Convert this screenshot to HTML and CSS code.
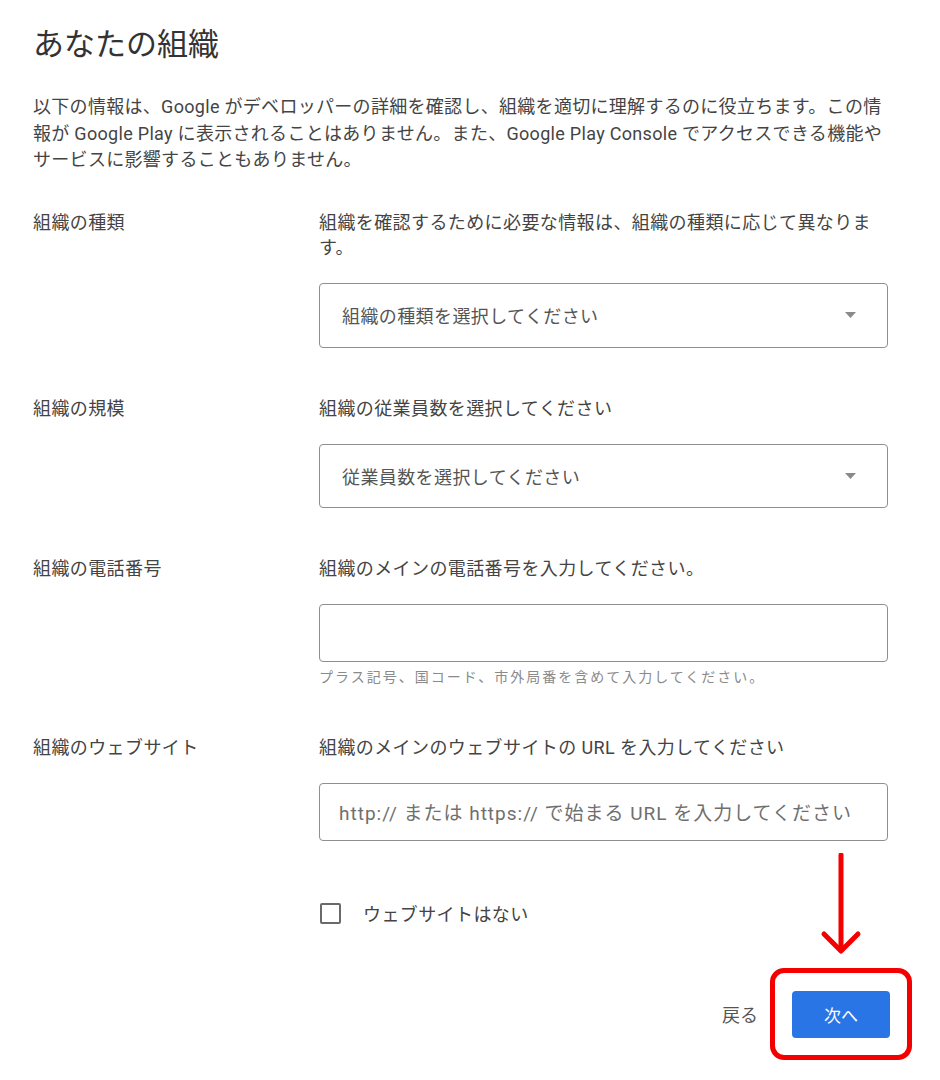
FILE: index.html
```html
<!DOCTYPE html>
<html lang="ja">
<head>
<meta charset="utf-8">
<title>あなたの組織</title>
<link rel="stylesheet" href="styles.css">
</head>
<body>
<main class="page">
  <h1 class="title">あなたの組織</h1>
  <p class="intro">以下の情報は、Google がデベロッパーの詳細を確認し、組織を適切に理解するのに役立ちます。この情報が Google Play に表示されることはありません。また、Google Play Console でアクセスできる機能やサービスに影響することもありません。</p>

  <section class="row row-first">
    <div class="label">組織の種類</div>
    <div class="field">
      <div class="desc">組織を確認するために必要な情報は、組織の種類に応じて異なります。</div>
      <div class="select select-tall">
        <span class="select-text">組織の種類を選択してください</span>
        <svg class="caret" width="11" height="6" viewBox="0 0 11 6"><path d="M0 0 L11 0 L5.5 6 Z" fill="#8a8a8a"/></svg>
      </div>
    </div>
  </section>

  <section class="row">
    <div class="label">組織の規模</div>
    <div class="field">
      <div class="desc">組織の従業員数を選択してください</div>
      <div class="select">
        <span class="select-text">従業員数を選択してください</span>
        <svg class="caret" width="11" height="6" viewBox="0 0 11 6"><path d="M0 0 L11 0 L5.5 6 Z" fill="#8a8a8a"/></svg>
      </div>
    </div>
  </section>

  <section class="row">
    <div class="label">組織の電話番号</div>
    <div class="field">
      <div class="desc">組織のメインの電話番号を入力してください。</div>
      <div class="input"></div>
      <div class="hint">プラス記号、国コード、市外局番を含めて入力してください。</div>
    </div>
  </section>

  <section class="row row-web">
    <div class="label">組織のウェブサイト</div>
    <div class="field">
      <div class="desc">組織のメインのウェブサイトの URL を入力してください</div>
      <div class="input"><span class="placeholder">http:// または https:// で始まる URL を入力してください</span></div>
    </div>
  </section>

  <div class="check-row">
    <span class="checkbox"></span>
    <span class="check-label">ウェブサイトはない</span>
  </div>

  <div class="actions">
    <span class="back">戻る</span>
    <div class="next-wrap">
      <svg class="arrow" width="44" height="104" viewBox="0 0 44 104">
        <path d="M22 2 L22 96" stroke="#f40000" stroke-width="5" stroke-linecap="round" fill="none"/>
        <path d="M5 81 L22 98 L39 81" stroke="#f40000" stroke-width="5" stroke-linecap="round" stroke-linejoin="round" fill="none"/>
      </svg>
      <span class="highlight"></span>
      <span class="next">次へ</span>
    </div>
  </div>
</main>
</body>
</html>
```

FILE: styles.css
```css
* { box-sizing: border-box; }

html, body {
  margin: 0;
  padding: 0;
  background: #ffffff;
}

body {
  font-family: Roboto, "Noto Sans CJK JP", sans-serif;
  color: #3c3c3c;
}

.page {
  width: 890px;
  padding: 25px 0 40px 33px;
}

.title {
  margin: 0;
  font-size: 31px;
  line-height: 40px;
  font-weight: 400;
  color: #333333;
}

.intro {
  margin: 29px 0 0 0;
  width: 857px;
  font-size: 18px;
  line-height: 26.5px;
  letter-spacing: 0.3px;
  color: #444444;
}

.row {
  display: grid;
  grid-template-columns: 286px 569px;
  margin-top: 48px;
}

.row-first {
  margin-top: 36px;
}

.label,
.desc {
  font-size: 18px;
  line-height: 25px;
  letter-spacing: 0.4px;
  color: #444444;
}

.desc {
  margin-bottom: 23px;
}

.select {
  height: 64px;
  border: 1px solid #8f8f8f;
  border-radius: 4px;
  display: flex;
  align-items: center;
  justify-content: space-between;
  padding: 0 31px 0 22px;
}

.select-tall {
  height: 65px;
}

.select-text {
  font-size: 18px;
  letter-spacing: 0.4px;
  color: #555555;
}

.caret {
  display: block;
}

.input {
  height: 58px;
  border: 1px solid #8f8f8f;
  border-radius: 4px;
  display: flex;
  align-items: center;
  padding: 0 0 0 19px;
  overflow: hidden;
  white-space: nowrap;
}

.placeholder {
  font-size: 19px;
  letter-spacing: 1px;
  color: #6f6f6f;
}

.hint {
  margin-top: 5px;
  font-size: 14px;
  line-height: 20px;
  letter-spacing: 2px;
  color: #8a8a8a;
}

.check-row {
  display: flex;
  align-items: center;
  gap: 22px;
  margin: 60px 0 0 287px;
  height: 25px;
}

.checkbox {
  width: 21px;
  height: 21px;
  border: 2px solid #6a6a6a;
  border-radius: 2px;
}

.check-label {
  font-size: 18px;
  letter-spacing: 0.4px;
  color: #444444;
}

.actions {
  display: flex;
  justify-content: flex-end;
  align-items: center;
  gap: 34px;
  margin-top: 65px;
  width: 857px;
}

.back {
  font-size: 18px;
  color: #555555;
}

.next-wrap {
  position: relative;
}

.next {
  display: flex;
  align-items: center;
  justify-content: center;
  width: 98px;
  height: 47px;
  background: #2a75e6;
  border-radius: 4px;
  color: #ffffff;
  font-size: 17px;
}

.highlight {
  position: absolute;
  left: -22px;
  top: -23px;
  width: 142px;
  height: 92px;
  border: 5px solid #f40000;
  border-radius: 14px;
}

.arrow {
  position: absolute;
  left: 27px;
  top: -138px;
}
```
